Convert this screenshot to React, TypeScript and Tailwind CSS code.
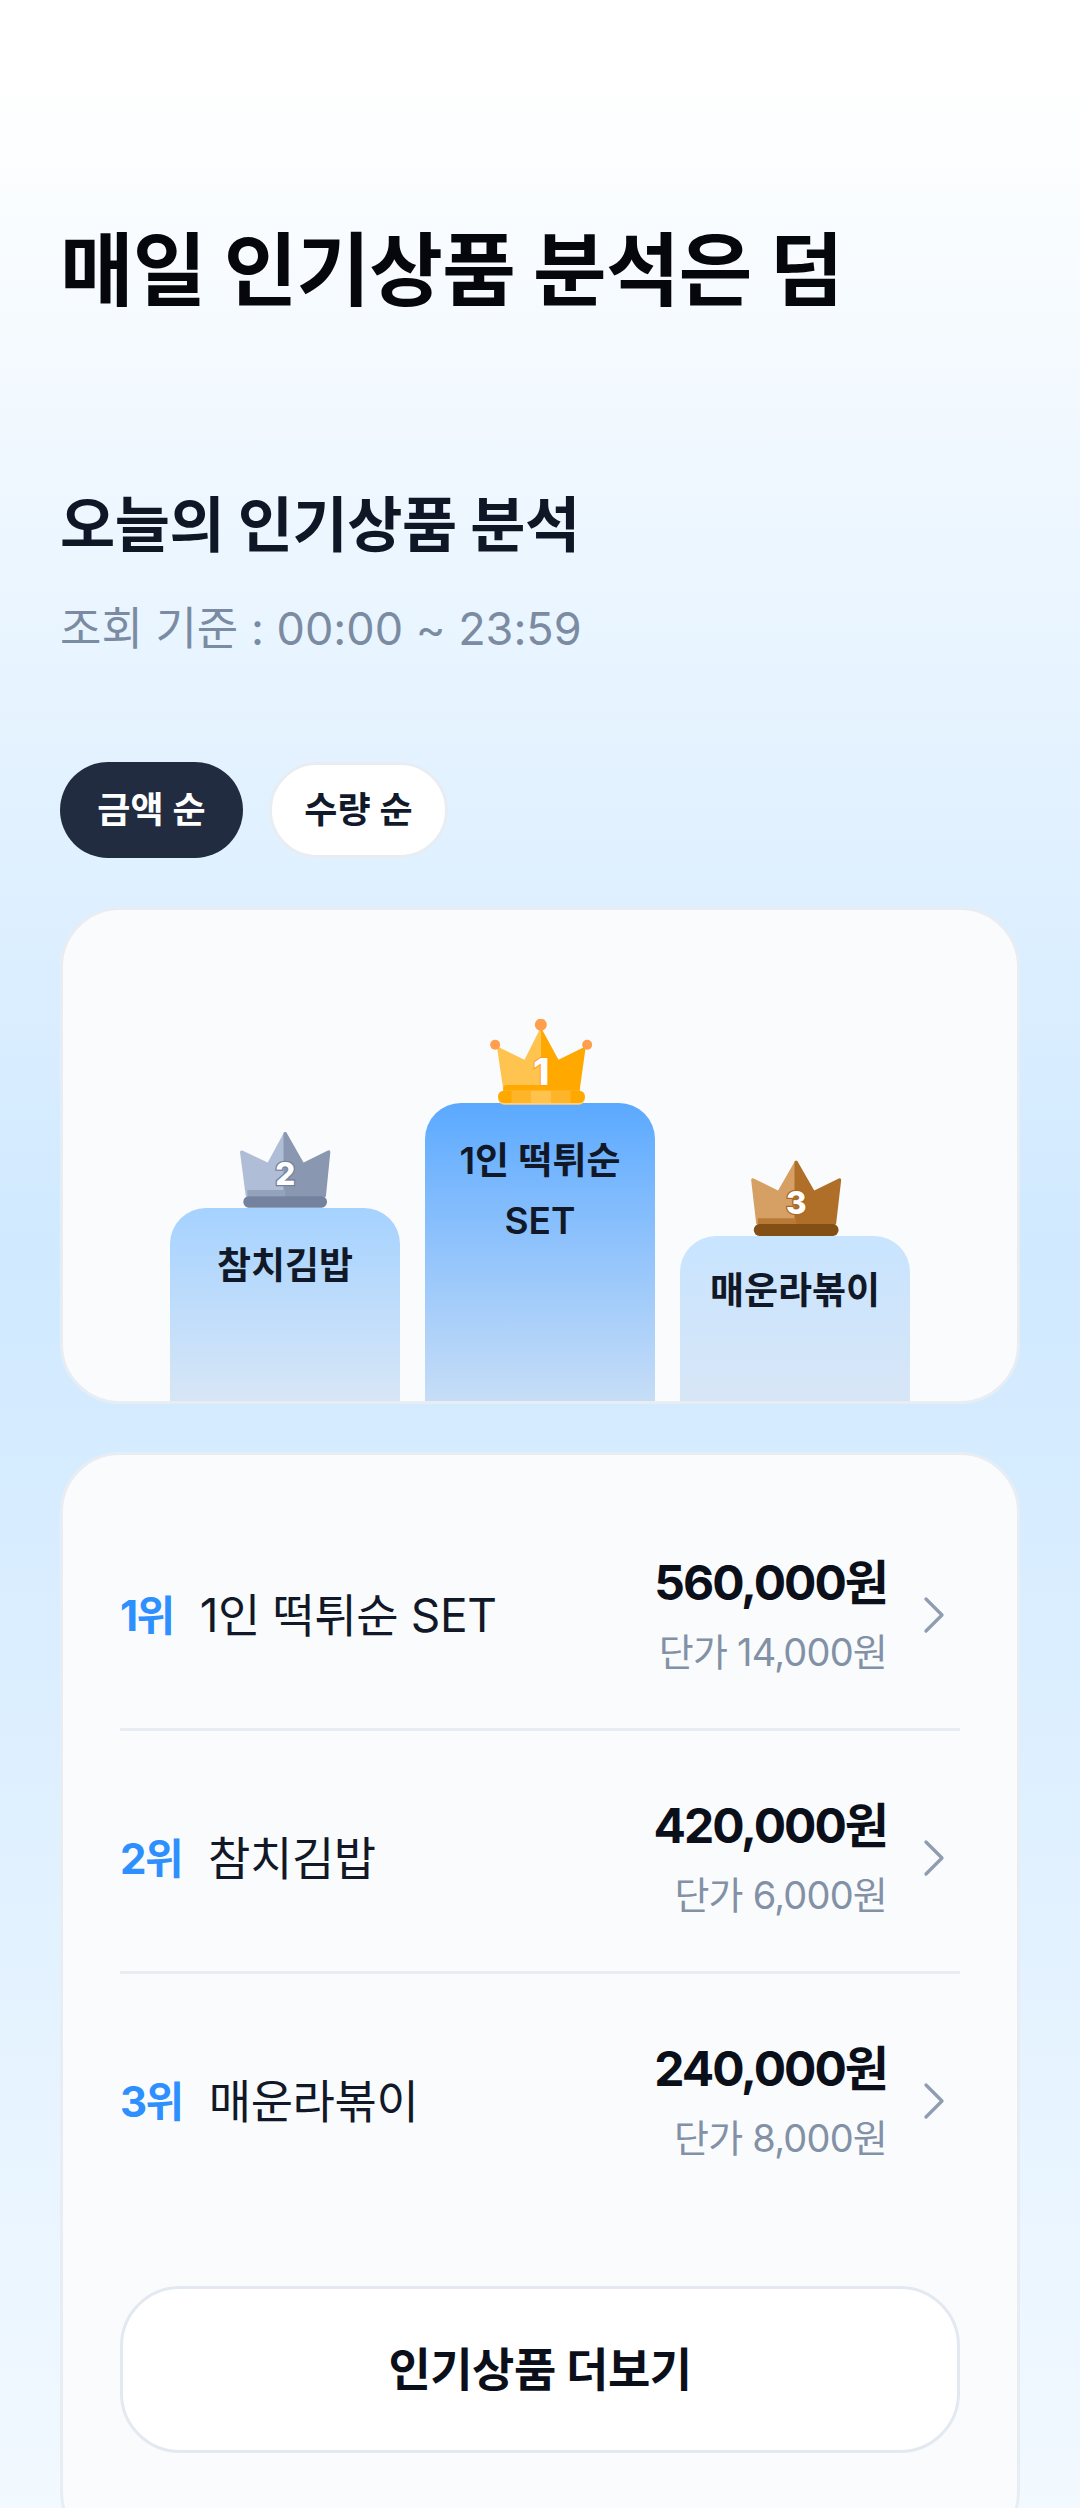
import React from 'react'
import { ChevronRight } from 'lucide-react'

type CrownProps = {
  viewBox: string
  w: number
  h: number
  pos: string
  light: string
  dark: string
  strip: string
  base: string
  num: string
  numStroke: string
  left: string
  right: string
  stripPts: string
  baseRect: { x: number; y: number; width: number; height: number; rx: number }
  numPos: { x: number; y: number }
}

function Crown(p: CrownProps) {
  return (
    <svg viewBox={p.viewBox} width={p.w} height={p.h} className={`absolute ${p.pos}`}>
      <polygon points={p.left} fill={p.light} stroke={p.light} strokeWidth="10" strokeLinejoin="round" />
      <polygon points={p.right} fill={p.dark} stroke={p.dark} strokeWidth="10" strokeLinejoin="round" />
      <polygon points={p.stripPts} fill={p.strip} />
      <rect {...p.baseRect} fill={p.base} />
      <text
        x={p.numPos.x}
        y={p.numPos.y}
        textAnchor="middle"
        fontSize="94"
        fontWeight="800"
        fontFamily="Inter, sans-serif"
        fill="#fff"
        stroke={p.numStroke}
        strokeWidth="8"
        paintOrder="stroke"
      >
        {p.num}
      </text>
    </svg>
  )
}

function GoldCrown() {
  return (
    <svg viewBox="211 90 308 258" width={103} height={86} className="absolute left-[65px] top-[-84px]">
      <polygon points="231,172 314,212 363,115 363,300 250,300" fill="#ffc34f" />
      <polygon points="363,115 416,212 498,172 480,300 363,300" fill="#ffa800" />
      <circle cx="226" cy="167" r="15" fill="#ff9f4d" />
      <circle cx="363" cy="107" r="18" fill="#ff9f4d" />
      <circle cx="502" cy="167" r="15" fill="#ff9f4d" />
      <rect x="250" y="288" width="230" height="30" rx="12" fill="#ffa800" />
      <rect x="235" y="305" width="260" height="42" rx="18" fill="#ffcf80" />
      <rect x="235" y="305" width="260" height="37" rx="17" fill="#ffa800" />
      <rect x="275" y="305" width="58" height="37" fill="#ffb52a" />
      <rect x="333" y="305" width="62" height="37" fill="#ffc24d" />
      <rect x="395" y="305" width="57" height="37" fill="#ffb52a" />
      <text
        x="364"
        y="288"
        textAnchor="middle"
        fontSize="112"
        fontWeight="800"
        fontFamily="Inter, sans-serif"
        fill="#fff"
        stroke="#ff9a1f"
        strokeWidth="6"
        paintOrder="stroke"
      >
        1
      </text>
    </svg>
  )
}

const items = [
  { rank: '1위', name: '1인 떡튀순 SET', amount: '560,000원', price: '단가 14,000원' },
  { rank: '2위', name: '참치김밥', amount: '420,000원', price: '단가 6,000원' },
  { rank: '3위', name: '매운라볶이', amount: '240,000원', price: '단가 8,000원' }
]

export default function App() {
  return (
    <div className="h-[2508px] w-[1080px] overflow-hidden bg-gradient-to-b from-white from-[3%] via-[#d0e9ff] via-[50%] to-[#f2f9ff] font-['Inter','Noto_Sans_CJK_KR',sans-serif] text-[#111827]">
      <div className="px-[60px] pt-[220px]">
        <h1 className="text-[80px] leading-[100px] font-bold tracking-[-0.01em] text-[#05070d]">매일 인기상품 분석은 덤</h1>

        <h2 className="mt-[165px] text-[60px] leading-[80px] font-bold tracking-[-0.5px] text-[#0f1726]">오늘의 인기상품 분석</h2>
        <p className="mt-[34px] text-[45px] leading-[60px] text-[#7b8ba1]">조회 기준 : 00:00 ~ 23:59</p>

        {/* 정렬 */}
        <div className="mt-[103px] flex gap-[26px]">
          <div className="flex h-[96px] w-[183px] items-center justify-center rounded-full bg-[#222c40] text-[36px] font-semibold text-white">
            금액 순
          </div>
          <div className="flex h-[96px] w-[179px] items-center justify-center rounded-full border-[3px] border-[#e8edf3] bg-white text-[36px] font-semibold text-[#111a2b]">
            수량 순
          </div>
        </div>

        {/* 시상대 */}
        <div className="mt-[49px] flex h-[497px] items-end justify-center gap-[25px] overflow-hidden rounded-[60px] border-[3px] border-[#e8edf3] bg-[#fafbfd]">
          <div className="relative h-[193px] w-[230px] rounded-t-[36px] bg-gradient-to-b from-[#a5d2ff] to-[#d7e6f6] pt-[28px] text-center text-[37px] leading-[60px] font-semibold">
            <Crown
              viewBox="60 40 272 227"
              w={91}
              h={76}
              pos="left-[70px] top-[-76px]"
              light="#b0bdd6"
              dark="#8a97b0"
              strip="#95a2bc"
              base="#7482a0"
              num="2"
              numStroke="#7482a0"
              left="65,100 145,138 195,45 195,230 82,230"
              right="195,45 248,138 325,100 312,230 195,230"
              stripPts="82,213 195,213 195,233 82,233"
              baseRect={{ x: 70, y: 232, width: 250, height: 34, rx: 16 }}
              numPos={{ x: 195, y: 198 }}
            />
            참치김밥
          </div>
          <div className="relative h-[298px] w-[230px] rounded-t-[36px] bg-gradient-to-b from-[#5aa9ff] to-[#c6ddf6] pt-[28px] text-center text-[37px] leading-[60px] font-semibold">
            <GoldCrown />
            1인 떡튀순
            <br />
            SET
          </div>
          <div className="relative h-[165px] w-[230px] rounded-t-[36px] bg-gradient-to-b from-[#c8e4ff] to-[#d7e6f6] pt-[25px] text-center text-[37px] leading-[60px] font-semibold">
            <Crown
              viewBox="95 60 272 228"
              w={91}
              h={76}
              pos="left-[71px] top-[-76px]"
              light="#d69f63"
              dark="#b06f28"
              strip="#b87a36"
              base="#844f14"
              num="3"
              numStroke="#a86a28"
              left="100,120 178,158 230,67 230,250 115,250"
              right="230,67 282,158 360,120 345,250 230,250"
              stripPts="115,235 230,235 230,253 115,253"
              baseRect={{ x: 103, y: 252, width: 254, height: 36, rx: 17 }}
              numPos={{ x: 230, y: 221 }}
            />
            매운라볶이
          </div>
        </div>

        {/* 목록 */}
        <div className="mt-[48px] h-[1100px] rounded-[60px] border-[3px] border-[#e8edf3] bg-[#fafbfd] px-[57px] pt-[33px]">
          {items.map((item, i) => (
            <div
              key={item.rank}
              className={`flex h-[243px] items-center border-b-[3px] pt-[14px] ${i < 2 ? 'border-[#e8edf3]' : 'border-transparent'}`}
            >
              <span className="text-[42px] font-bold tracking-[-1.5px] text-[#2e90ff]">{item.rank}</span>
              <span className="ml-[26px] flex-1 text-[46px] tracking-[-0.4px] text-[#111827]">{item.name}</span>
              <div className="text-right">
                <div className="text-[48px] leading-[70px] font-bold tracking-[-2px] text-[#0b0f19]">{item.amount}</div>
                <div className="mt-[4px] text-[38px] leading-[60px] tracking-[-0.8px] text-[#8291a6]">{item.price}</div>
              </div>
              <ChevronRight className="ml-[15px] mr-[-6px] h-[64px] w-[64px] text-[#8f9db0]" strokeWidth={1.25} />
            </div>
          ))}
          <div className="mt-[69px] flex h-[167px] items-center justify-center rounded-[60px] border-[3px] border-[#e3e9f0] bg-white text-[46px] font-bold tracking-[-0.5px] text-[#0b0f19]">
            인기상품 더보기
          </div>
        </div>
      </div>
    </div>
  )
}
